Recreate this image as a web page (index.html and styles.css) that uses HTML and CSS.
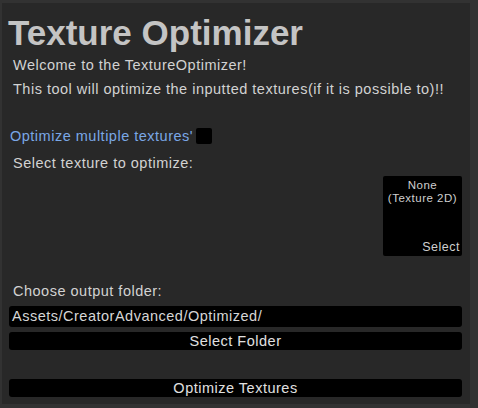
FILE: index.html
```html
<!DOCTYPE html>
<html>
<head>
<meta charset="utf-8">
<link rel="stylesheet" href="styles.css">
</head>
<body>
<div class="window">
  <div class="panel">
    <h1 class="title">Texture Optimizer</h1>
    <p class="label welcome">Welcome to the TextureOptimizer!</p>
    <p class="label intro">This tool will optimize the inputted textures(if it is possible to)!!</p>
    <div class="toggle-row">
      <span class="toggle-label">Optimize multiple textures'</span>
      <span class="checkbox"></span>
    </div>
    <p class="label select-label">Select texture to optimize:</p>
    <div class="texture-row">
      <div class="texture-field">
        <div class="texture-name">None<br>(Texture 2D)</div>
        <div class="texture-select">Select</div>
      </div>
    </div>
    <p class="label folder-label">Choose output folder:</p>
    <div class="text-field">Assets/CreatorAdvanced/Optimized/</div>
    <div class="button">Select Folder</div>
    <div class="button optimize">Optimize Textures</div>
  </div>
</div>
</body>
</html>
```
FILE: styles.css
```css
html, body {
  margin: 0;
  padding: 0;
  background: #323232;
}
body {
  width: 478px;
  height: 408px;
  overflow: hidden;
  font-family: "Liberation Sans", Arial, sans-serif;
  letter-spacing: 0.5px;
}
.window {
  padding: 3px 8px 4px 2px;
  height: 408px;
  box-sizing: border-box;
}
.panel {
  background: #282828;
  height: 100%;
  box-sizing: border-box;
  padding: 0 8px 0 7px;
  display: flex;
  flex-direction: column;
}
.title {
  margin: 10px 0 0 -1px;
  font-size: 35px;
  line-height: 40px;
  font-weight: bold;
  color: #c4c4c4;
  letter-spacing: 0;
}
.label {
  margin: 0;
  padding-left: 4px;
  font-size: 14.5px;
  line-height: 24px;
  color: #d2d2d2;
}
.welcome {
  margin-top: 0;
}
.toggle-row {
  margin-top: 26px;
  display: flex;
  align-items: center;
  gap: 3px;
  height: 18px;
}
.toggle-label {
  font-size: 14.5px;
  color: #7aa7e6;
  padding-left: 1px;
}
.checkbox {
  width: 16px;
  height: 16px;
  background: #000;
  border-radius: 2px;
}
.select-label {
  margin-top: 6px;
}
.texture-row {
  display: flex;
  justify-content: flex-end;
  margin-top: 1px;
}
.texture-field {
  width: 79px;
  height: 80px;
  background: #000;
  border-radius: 2px;
  display: flex;
  flex-direction: column;
  justify-content: space-between;
  color: #cfcfcf;
  font-size: 11.5px;
  line-height: 13px;
  text-align: center;
  box-sizing: border-box;
  padding: 3px 2px 2px 2px;
}
.texture-select {
  text-align: right;
  font-size: 12.5px;
}
.folder-label {
  margin-top: 23px;
}
.text-field {
  margin-top: 3px;
  height: 21px;
  background: #000;
  border-radius: 3px;
  color: #d6d6d6;
  font-size: 14.5px;
  line-height: 20px;
  padding-left: 3px;
}
.button {
  margin-top: 5px;
  height: 18px;
  background: #000;
  border-radius: 3px;
  color: #e0e0e0;
  font-size: 14.5px;
  line-height: 18px;
  text-align: center;
}
.optimize {
  margin-top: 29px;
}
```
